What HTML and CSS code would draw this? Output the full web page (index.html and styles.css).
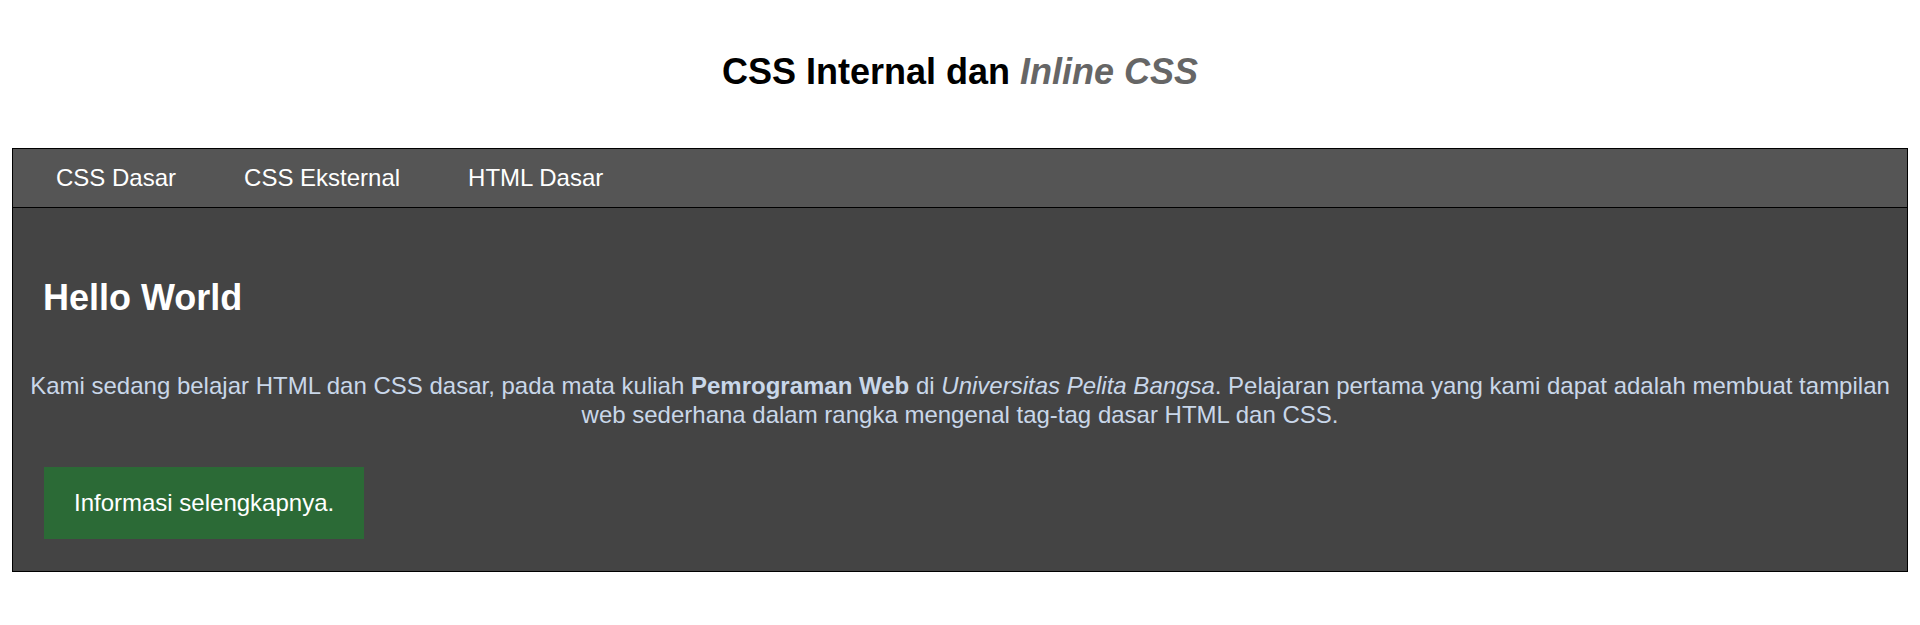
FILE: index.html
```html
<!DOCTYPE html>
<html lang="id">
<head>
<meta charset="utf-8">
<title>CSS Internal dan Inline CSS</title>
<link rel="stylesheet" href="styles.css">
</head>
<body>
<div class="page">
  <header class="header">
    <h1 class="title">CSS Internal dan <em class="title-em">Inline CSS</em></h1>
  </header>
  <div class="card">
    <nav class="nav">
      <a class="nav-link" href="#">CSS Dasar</a>
      <a class="nav-link" href="#">CSS Eksternal</a>
      <a class="nav-link" href="#">HTML Dasar</a>
    </nav>
    <main class="content">
      <h2 class="hello">Hello World</h2>
      <p class="lead">Kami sedang belajar HTML dan CSS dasar, pada mata kuliah <strong>Pemrograman Web</strong> di <em>Universitas Pelita Bangsa</em>. Pelajaran pertama yang kami dapat adalah membuat tampilan web sederhana dalam rangka mengenal tag-tag dasar HTML dan CSS.</p>
      <a class="btn" href="#">Informasi selengkapnya.</a>
    </main>
  </div>
</div>
</body>
</html>
```

FILE: styles.css
```css
html, body {
  margin: 0;
  padding: 0;
  background: #fff;
}

body {
  font-family: "Liberation Sans", Arial, sans-serif;
  font-size: 24px;
}

.page {
  padding: 0 12px;
}

.header {
  padding-top: 51px;
}

.title {
  margin: 0;
  font-size: 36px;
  font-weight: bold;
  line-height: 41px;
  text-align: center;
  color: #000;
}

.title-em {
  font-style: italic;
  color: #666;
}

.card {
  margin-top: 56px;
  border: 1px solid #000;
}

.nav {
  display: flex;
  background: #555;
  padding: 15px 0 15px 9px;
  border-bottom: 1px solid #000;
}

.nav-link {
  display: block;
  padding: 0 34px;
  font-size: 24px;
  line-height: 28px;
  color: #fff;
  text-decoration: none;
}

.content {
  background: #444;
  padding: 69px 0 32px;
}

.hello {
  margin: 0 0 0 30px;
  font-size: 36px;
  line-height: 41px;
  font-weight: bold;
  color: #fff;
}

.lead {
  margin: 53px 0 0;
  padding: 0 12px;
  text-align: center;
  font-size: 24px;
  line-height: 29px;
  color: #c9d7e9;
}

.btn {
  display: inline-block;
  margin: 38px 0 0 31px;
  padding: 22px 30px;
  background: #2b6a36;
  color: #fff;
  font-size: 24px;
  line-height: 28px;
  text-decoration: none;
}
```
